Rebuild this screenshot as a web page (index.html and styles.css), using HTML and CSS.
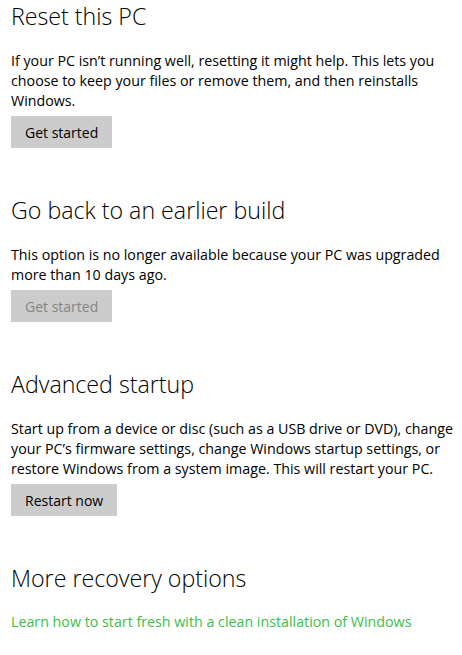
FILE: index.html
```html
<!DOCTYPE html>
<html>
<head>
<meta charset="utf-8">
<link rel="stylesheet" href="styles.css">
</head>
<body>
<div class="page">
  <section class="group">
    <h2 class="title">Reset this PC</h2>
    <p class="text">If your PC isn’t running well, resetting it might help. This lets you choose to keep your files or remove them, and then reinstalls Windows.</p>
    <button class="btn">Get started</button>
  </section>
  <section class="group">
    <h2 class="title">Go back to an earlier build</h2>
    <p class="text">This option is no longer available because your PC was upgraded more than 10 days ago.</p>
    <button class="btn btn-disabled" disabled>Get started</button>
  </section>
  <section class="group">
    <h2 class="title">Advanced startup</h2>
    <p class="text">Start up from a device or disc (such as a USB drive or DVD), change your PC’s firmware settings, change Windows startup settings, or restore Windows from a system image. This will restart your PC.</p>
    <button class="btn">Restart now</button>
  </section>
  <section class="group">
    <h2 class="title">More recovery options</h2>
    <a class="link" href="#">Learn how to start fresh with a clean installation of Windows</a>
  </section>
</div>
</body>
</html>
```
FILE: styles.css
```css
html, body {
  margin: 0;
  padding: 0;
  background: #fff;
}
.page {
  padding: 0 0 0 11px;
  font-family: "Open Sans", "Noto Sans", sans-serif;
  color: #000;
  display: flex;
  flex-direction: column;
}
.group {
  display: flex;
  flex-direction: column;
  align-items: flex-start;
  margin-bottom: 46px;
}
.title {
  margin: 0;
  font-size: 23.2px;
  font-weight: 300;
  line-height: 32px;
  color: #000;
}
.text {
  margin: 19px 0 0 0;
  font-size: 14.25px;
  line-height: 20px;
  color: #000;
}
.btn {
  margin-top: 5px;
  height: 32px;
  padding: 0 14px;
  border: none;
  background: #cccccc;
  font-family: inherit;
  font-size: 14px;
  color: #000;
}
.btn-disabled {
  color: #858585;
}
.link {
  margin-top: 18px;
  font-size: 14.25px;
  line-height: 20px;
  color: #3dbd4c;
  text-decoration: none;
}
```
